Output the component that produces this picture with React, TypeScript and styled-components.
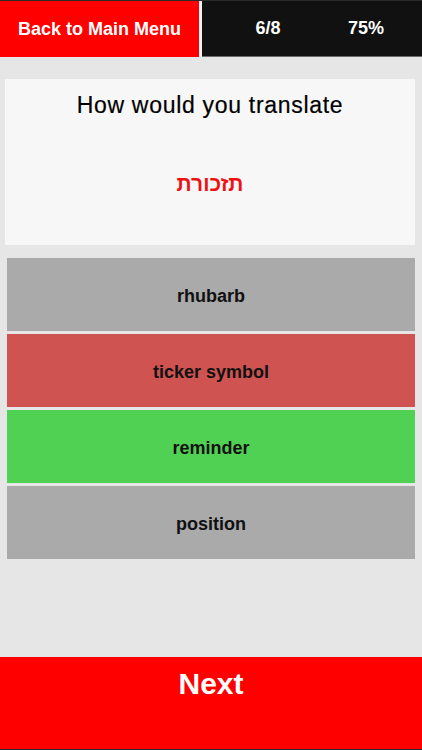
import styled, { createGlobalStyle } from 'styled-components';

const GlobalStyle = createGlobalStyle`
  html, body {
    margin: 0;
    padding: 0;
    background: #e6e6e6;
  }
  * {
    box-sizing: border-box;
  }
`;

type Answer = {
  label: string;
  state: 'idle' | 'wrong' | 'right';
};

const answers: Answer[] = [
  { label: 'rhubarb', state: 'idle' },
  { label: 'ticker symbol', state: 'wrong' },
  { label: 'reminder', state: 'right' },
  { label: 'position', state: 'idle' },
];

const Screen = styled.div`
  width: 422px;
  height: 750px;
  display: flex;
  flex-direction: column;
  background: #e6e6e6;
  font-family: 'Liberation Sans', Arial, sans-serif;
  border-top: 1px solid #2a2a2a;
  border-bottom: 1px solid #2a2a2a;
`;

const Header = styled.header`
  height: 56px;
  display: flex;
  flex-shrink: 0;
`;

const BackButton = styled.button`
  width: 199px;
  border: none;
  background: #ff0000;
  color: #fff;
  font-family: inherit;
  font-weight: 700;
  font-size: 18px;
  padding: 0;
  cursor: pointer;
`;

const Divider = styled.div`
  width: 3px;
  background: #f4f4f4;
`;

const Stats = styled.div`
  flex: 1;
  display: flex;
  background: #111;
  border-bottom: 1px solid #6a6a6a;
`;

const StatCell = styled.div<{ $width: number }>`
  width: ${({ $width }) => $width}px;
  display: flex;
  align-items: center;
  justify-content: center;
  color: #fff;
  font-weight: 700;
  font-size: 18px;
`;

const Body = styled.main`
  flex: 1;
  display: flex;
  flex-direction: column;
  padding: 22px 7px 0 5px;
`;

const QuestionCard = styled.section`
  height: 166px;
  background: #f7f7f7;
  display: flex;
  flex-direction: column;
  align-items: center;
  padding-top: 13px;
`;

const Prompt = styled.div`
  font-size: 23px;
  letter-spacing: 0.7px;
  color: #000;
  -webkit-text-stroke: 0.2px #000;
`;

const Word = styled.div`
  margin-top: 53px;
  font-size: 21px;
  font-weight: 700;
  color: #ee1111;
  direction: rtl;
`;

const AnswerList = styled.div`
  margin: 13px 0 0 2px;
  display: flex;
  flex-direction: column;
  gap: 3px;
`;

const answerColors = {
  idle: '#aaaaaa',
  wrong: '#cf5351',
  right: '#51d154',
};

const AnswerButton = styled.button<{ $state: Answer['state'] }>`
  height: 73px;
  border: none;
  background: ${({ $state }) => answerColors[$state]};
  color: #111;
  font-family: inherit;
  font-weight: 700;
  font-size: 18px;
  padding: 3px 0 0;
  cursor: pointer;
`;

const NextButton = styled.button`
  height: 92px;
  flex-shrink: 0;
  border: none;
  background: #ff0000;
  color: #fff;
  font-family: inherit;
  font-weight: 700;
  font-size: 30px;
  display: flex;
  justify-content: center;
  align-items: flex-start;
  padding: 10px 0 0;
  cursor: pointer;
`;

const App = () => {
  return (
    <>
      <GlobalStyle />
      <Screen>
        <Header>
          <BackButton>Back to Main Menu</BackButton>
          <Divider />
          <Stats>
            <StatCell $width={132}>6/8</StatCell>
            <StatCell $width={64}>75%</StatCell>
          </Stats>
        </Header>
        <Body>
          <QuestionCard>
            <Prompt>How would you translate</Prompt>
            <Word>תזכורת</Word>
          </QuestionCard>
          <AnswerList>
            {answers.map((a) => (
              <AnswerButton key={a.label} $state={a.state}>
                {a.label}
              </AnswerButton>
            ))}
          </AnswerList>
        </Body>
        <NextButton>Next</NextButton>
      </Screen>
    </>
  );
};

export default App;
